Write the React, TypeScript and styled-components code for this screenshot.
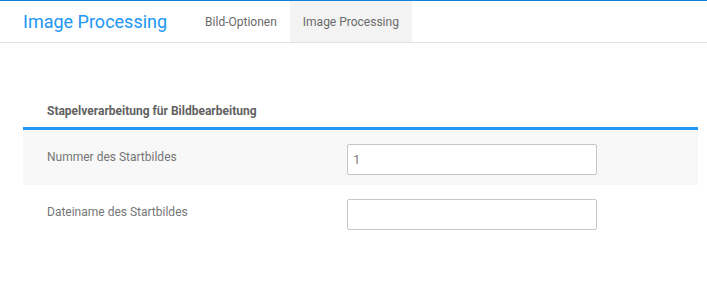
import React from "react";
import styled, { createGlobalStyle } from "styled-components";

type Field = {
  label: string;
  value: string;
};

const fields: Field[] = [
  { label: "Nummer des Startbildes", value: "1" },
  { label: "Dateiname des Startbildes", value: "" },
];

const GlobalStyle = createGlobalStyle`
  body {
    margin: 0;
    background: #fff;
    font-family: Roboto, "Liberation Sans", sans-serif;
  }
`;

const App: React.FC = () => {
  return (
    <>
      <GlobalStyle />
      <Header>
        <Title>Image Processing</Title>
        <Tabs>
          <Tab>Bild-Optionen</Tab>
          <Tab active>Image Processing</Tab>
        </Tabs>
      </Header>

      <Content>
        <Section>
          <SectionTitle>Stapelverarbeitung für Bildbearbeitung</SectionTitle>
          {fields.map((field, index) => (
            <Row key={field.label} striped={index % 2 === 0}>
              <Label>{field.label}</Label>
              <Input type="text" defaultValue={field.value} />
            </Row>
          ))}
        </Section>
      </Content>
    </>
  );
};

const Header = styled.header`
  display: flex;
  align-items: stretch;
  height: 41px;
  padding-left: 23px;
  border-top: 1px solid #1180dc;
  border-bottom: 1px solid #e3e3e3;
`;

const Title = styled.h1`
  margin: 0 25px 0 0;
  align-self: center;
  font-size: 18px;
  font-weight: 400;
  color: #2196f3;
`;

const Tabs = styled.nav`
  display: flex;
`;

const Tab = styled.div<{ active?: boolean }>`
  display: flex;
  align-items: center;
  padding: 0 13px;
  font-size: 12px;
  color: #6a6a6a;
  background: ${(p) => (p.active ? "#f3f3f3" : "transparent")};
`;

const Content = styled.main`
  padding: 53px 9px 0 23px;
`;

const Section = styled.section`
  display: flex;
  flex-direction: column;
`;

const SectionTitle = styled.h2`
  margin: 0;
  padding: 8px 24px 9px;
  font-size: 12px;
  font-weight: 700;
  color: #616161;
  border-bottom: 3px solid #2196f3;
`;

const Row = styled.div<{ striped: boolean }>`
  box-sizing: border-box;
  display: grid;
  grid-template-columns: 300px 250px;
  align-items: center;
  height: 55px;
  padding: 4px 24px 0;
  background: ${(p) => (p.striped ? "#f8f8f8" : "#fff")};
`;

const Label = styled.label`
  margin-bottom: 6px;
  font-size: 12px;
  color: #757575;
`;

const Input = styled.input`
  box-sizing: border-box;
  width: 250px;
  height: 31px;
  padding: 0 5px;
  border: 1px solid #c6c6c6;
  border-radius: 2px;
  background: #fff;
  font-family: inherit;
  font-size: 13px;
  color: #808080;
  outline: none;
`;

export default App;
